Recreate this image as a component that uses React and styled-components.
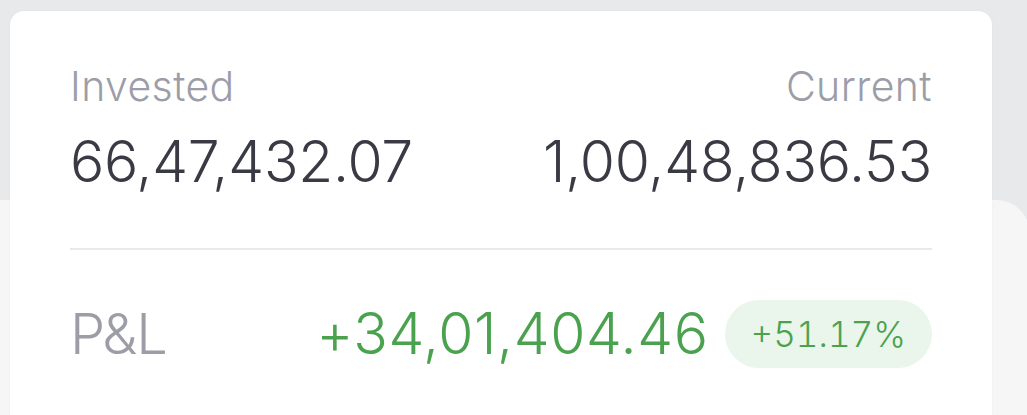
import React from 'react'
import styled, { createGlobalStyle } from 'styled-components'

const GlobalStyle = createGlobalStyle`
  html, body {
    margin: 0;
    padding: 0;
    background: #e8e9eb;
    font-family: Inter, "Noto Sans", sans-serif;
    overflow: hidden;
  }
`

const Page = styled.div`
  position: relative;
  width: 1027px;
  height: 415px;
  overflow: hidden;
  padding: 11px 35px 0 10px;
  box-sizing: border-box;
`

// lighter sheet that sits behind the card
const Sheet = styled.div`
  position: absolute;
  left: -30px;
  top: 200px;
  width: 1060px;
  height: 400px;
  background: #f6f6f7;
  border-radius: 34px;
  z-index: 0;
`

const Card = styled.section`
  position: relative;
  z-index: 1;
  background: #ffffff;
  border-radius: 14px;
  box-shadow: 0 0 3px rgba(0, 0, 0, 0.04);
  padding: 51px 60px 80px 60px;
  height: 500px;
  box-sizing: border-box;
`

const Row = styled.div`
  display: flex;
  justify-content: space-between;
  align-items: flex-start;
`

const Col = styled.div`
  display: flex;
  flex-direction: column;
  align-items: ${p => (p.$right ? 'flex-end' : 'flex-start')};
`

const Label = styled.span`
  font-size: 41px;
  line-height: 48px;
  font-weight: 300;
  color: #9d9da8;
  letter-spacing: 0.4px;
`

const Value = styled.span`
  margin-top: 22px;
  font-size: 57px;
  line-height: 60px;
  font-weight: 300;
  color: #3a3a45;
  letter-spacing: -0.2px;
`

const Divider = styled.hr`
  border: 0;
  height: 2px;
  background: #e9e9ec;
  margin: 56px 0 0 0;
`

const PnlRow = styled(Row)`
  margin-top: 49px;
  align-items: center;
`

const PnlLabel = styled.span`
  font-size: 56px;
  font-weight: 300;
  color: #9d9da8;
  letter-spacing: -1px;
`

const PnlRight = styled.div`
  display: flex;
  align-items: center;
  gap: 16px;
`

const Gain = styled.span`
  font-size: 57px;
  font-weight: 300;
  color: #4aa24f;
  letter-spacing: 0.6px;
`

const Badge = styled.span`
  display: inline-flex;
  align-items: center;
  height: 68px;
  padding: 0 26px;
  border-radius: 34px;
  background: #eaf5eb;
  color: #4aa24f;
  font-size: 35px;
  font-weight: 300;
  letter-spacing: 0;
  font-variant-numeric: tabular-nums;
`

export default function App() {
  return (
    <>
      <GlobalStyle />
      <Page>
        <Sheet />
        <Card>
          <Row>
            <Col>
              <Label>Invested</Label>
              <Value>66,47,432.07</Value>
            </Col>
            <Col $right>
              <Label>Current</Label>
              <Value>1,00,48,836.53</Value>
            </Col>
          </Row>
          <Divider />
          <PnlRow>
            <PnlLabel>P&amp;L</PnlLabel>
            <PnlRight>
              <Gain>+34,01,404.46</Gain>
              <Badge>+51.17%</Badge>
            </PnlRight>
          </PnlRow>
        </Card>
      </Page>
    </>
  )
}
